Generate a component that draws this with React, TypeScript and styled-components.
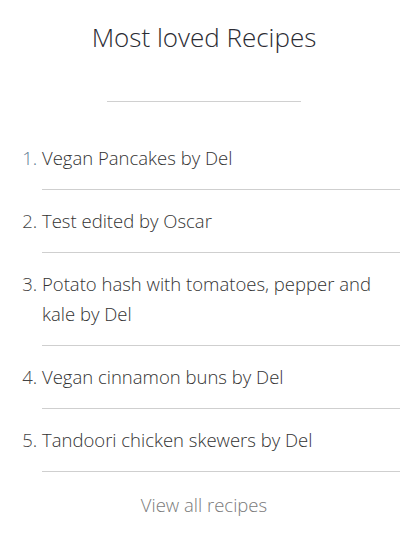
import React from 'react';
import styled, { createGlobalStyle } from 'styled-components';

const GlobalStyle = createGlobalStyle`
  body {
    margin: 8px;
    background: #fff;
    font-family: "Open Sans", "Liberation Sans", sans-serif;
    font-weight: 300;
    color: #333;
  }
`;

const Panel = styled.section`
  display: flex;
  flex-direction: column;
  align-items: center;
`;

const Title = styled.h2`
  margin: 9px 0 0;
  font-size: 26px;
  line-height: 40px;
  font-weight: 300;
  color: #2b2b33;
`;

const Rule = styled.hr`
  width: 194px;
  margin: 44px 0 25px;
  border: 0;
  border-top: 1px solid #d0d0d0;
`;

const List = styled.ol`
  align-self: stretch;
  margin: 0;
  padding-left: 34px;
`;

const Item = styled.li<{ $muted?: boolean }>`
  padding: 16px 0;
  border-bottom: 1px solid #cfcfcf;
  font-size: 18.5px;
  line-height: 30px;
  color: #333;

  &::marker {
    color: ${p => (p.$muted ? '#5f7d94' : '#444')};
  }
`;

const ViewAll = styled.a`
  margin-top: 18px;
  font-size: 18.5px;
  line-height: 30px;
  color: #7a7a7a;
  text-decoration: none;
  cursor: pointer;
`;

const recipes = [
  'Vegan Pancakes by Del',
  'Test edited by Oscar',
  'Potato hash with tomatoes, pepper and kale by Del',
  'Vegan cinnamon buns by Del',
  'Tandoori chicken skewers by Del',
];

export default function App() {
  return (
    <>
      <GlobalStyle />
      <Panel>
        <Title>Most loved Recipes</Title>
        <Rule />
        <List>
          {recipes.map((r, i) => (
            <Item key={r} $muted={i === 0}>{r}</Item>
          ))}
        </List>
        <ViewAll>View all recipes</ViewAll>
      </Panel>
    </>
  );
}
